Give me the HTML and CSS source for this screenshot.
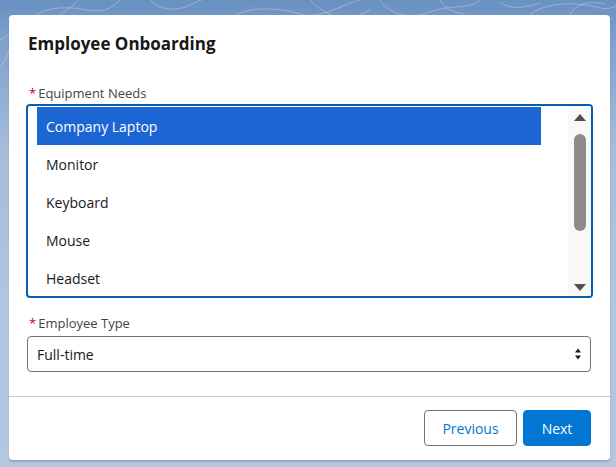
FILE: index.html
```html
<!DOCTYPE html>
<html lang="en">
<head>
<meta charset="utf-8">
<title>Employee Onboarding</title>
<link rel="stylesheet" href="styles.css">
</head>
<body>
<svg class="bg-lines" width="616" height="120" viewBox="0 0 616 120" aria-hidden="true">
  <g fill="none" stroke="rgba(255,255,255,0.28)" stroke-width="1">
    <path d="M0 40 C20 30 30 10 60 8 C90 6 100 20 120 0"/>
    <path d="M-5 70 C15 60 5 30 30 25 C55 20 70 10 80 -2"/>
    <path d="M150 0 C160 10 175 12 190 5 C200 0 205 -2 210 0"/>
    <path d="M230 18 C250 5 280 8 300 14 C320 20 340 5 360 0"/>
    <path d="M310 0 C325 15 345 25 370 10"/>
    <path d="M380 0 C390 15 410 20 430 12 C450 4 470 10 480 0"/>
    <path d="M500 2 C510 10 525 8 540 3"/>
    <path d="M530 14 C545 4 570 0 600 8 C610 10 616 6 620 4"/>
    <path d="M570 15 C575 4 590 0 605 4"/>
    <path d="M440 0 C445 8 450 12 465 14"/>
  </g>
</svg>
<main class="card">
  <h1 class="title">Employee Onboarding</h1>
  <div class="body">
    <div class="label"><span class="req">*</span>Equipment Needs</div>
    <div class="listbox">
      <ul class="options">
        <li class="option selected">Company Laptop</li>
        <li class="option">Monitor</li>
        <li class="option">Keyboard</li>
        <li class="option">Mouse</li>
        <li class="option">Headset</li>
      </ul>
      <div class="scrollbar">
        <svg class="arrow" width="14" height="9" viewBox="0 0 14 9"><path d="M7 1 L13 8 L1 8 Z" fill="#505050"/></svg>
        <div class="thumb"></div>
        <svg class="arrow" width="14" height="9" viewBox="0 0 14 9"><path d="M1 1 L13 1 L7 8 Z" fill="#505050"/></svg>
      </div>
    </div>
    <div class="label label-second"><span class="req">*</span>Employee Type</div>
    <div class="select">
      <span class="select-value">Full-time</span>
      <svg class="select-arrows" width="8" height="14" viewBox="0 0 8 14"><path d="M4 1.5 L7 5.5 L1 5.5 Z M1 8.5 L7 8.5 L4 12.5 Z" fill="#181818"/></svg>
    </div>
  </div>
  <footer class="footer">
    <button class="btn btn-neutral">Previous</button>
    <button class="btn btn-brand">Next</button>
  </footer>
</main>
</body>
</html>
```

FILE: styles.css
```css
* { box-sizing: border-box; }
html, body { margin: 0; padding: 0; }
body {
  width: 616px;
  height: 467px;
  overflow: hidden;
  position: relative;
  font-family: "Open Sans", "Noto Sans", Arial, sans-serif;
  color: #181818;
  background: linear-gradient(180deg, #6990c2 0px, #7ea1cc 40px, #a6bddc 150px, #b0c5e0 300px, #b3c7e1 467px);
  padding: 15px 6px 0 9px;
}
.bg-lines { position: absolute; left: 0; top: 0; }
.card {
  position: relative;
  height: 445px;
  background: #fff;
  border-radius: 4px;
  box-shadow: 0 2px 2px rgba(0,0,0,0.16);
  display: flex;
  flex-direction: column;
  padding-top: 17px;
}
.title {
  margin: 0 0 0 19px;
  font-size: 17px;
  line-height: 24px;
  font-weight: 700;
  color: #181818;
}
.body {
  flex: 1;
  padding: 28px 17px 0 17px;
}
.label {
  font-size: 13px;
  line-height: 18px;
  color: #444;
  padding-left: 3px;
  margin-bottom: 2px;
}
.label-second { margin-top: 16px; margin-bottom: 4px; }
.req { color: #ba0517; margin-right: 2px; }
.listbox {
  width: 567px;
  height: 194px;
  border: 2px solid #0b5cab;
  border-radius: 4px;
  display: flex;
  overflow: hidden;
}
.options {
  list-style: none;
  margin: 0;
  padding: 1px 0 0 9px;
  flex: 1;
}
.option {
  width: 504px;
  height: 38px;
  line-height: 40px;
  padding-left: 9px;
  font-size: 14px;
  color: #181818;
}
.option.selected { background: #1b66d3; color: #fff; }
.scrollbar {
  width: 23px;
  background: #f9f9f9;
  display: flex;
  flex-direction: column;
  align-items: center;
  padding: 7px 0 4px;
}
.arrow { display: block; }
.thumb {
  width: 12px;
  height: 97px;
  background: #8c8c8c;
  border-radius: 6px;
  margin: 12px 0 auto;
}
.select {
  width: 564px;
  height: 36px;
  margin-left: 1px;
  border: 1px solid #747474;
  border-radius: 4px;
  display: flex;
  align-items: center;
  justify-content: space-between;
  padding: 0 8px 0 9px;
}
.select-value { font-size: 14px; color: #181818; }
.select-arrows { display: block; }
.footer {
  border-top: 1px solid #c9c9c9;
  padding: 13px 19px 14px 0;
  display: flex;
  justify-content: flex-end;
  gap: 6px;
}
.btn {
  height: 36px;
  border-radius: 4px;
  font-family: inherit;
  font-size: 14px;
  padding: 0;
  cursor: pointer;
}
.btn-neutral {
  width: 93px;
  background: #fff;
  border: 1px solid #747474;
  color: #0176d3;
}
.btn-brand {
  width: 68px;
  background: #0176d3;
  border: 1px solid #0176d3;
  color: #fff;
}
```
